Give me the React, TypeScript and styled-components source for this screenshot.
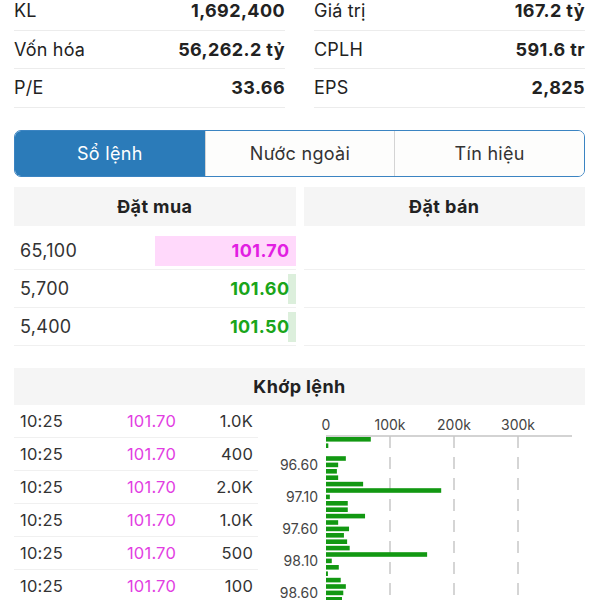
import styled, { createGlobalStyle } from 'styled-components';

const GlobalStyle = createGlobalStyle`
  body {
    margin: 0;
    background: #fff;
    font-family: Inter, "Noto Sans", sans-serif;
    color: #222;
  }
`;

const stats = [
  ['KL', '1,692,400', 'Giá trị', '167.2 tỷ'],
  ['Vốn hóa', '56,262.2 tỷ', 'CPLH', '591.6 tr'],
  ['P/E', '33.66', 'EPS', '2,825'],
];

const tabs = ['Sổ lệnh', 'Nước ngoài', 'Tín hiệu'];

const bids = [
  { vol: '65,100', price: '101.70', ceil: true, bar: 50 },
  { vol: '5,700', price: '101.60', ceil: false, bar: 2.5 },
  { vol: '5,400', price: '101.50', ceil: false, bar: 2.5 },
];

const trades = [
  ['10:25', '101.70', '1.0K'],
  ['10:25', '101.70', '400'],
  ['10:25', '101.70', '2.0K'],
  ['10:25', '101.70', '1.0K'],
  ['10:25', '101.70', '500'],
  ['10:25', '101.70', '100'],
];

// volume per price step (in k), from 96.20 upward
const volumes = [
  70, 3.6, 0, 31, 19, 17, 19, 58, 180, 6, 34, 34, 61, 19, 36, 28, 33, 37, 158, 9,
  20, 3, 23, 31, 27, 25, 22, 18,
];

const Page = styled.div`
  width: 600px;
  height: 600px;
  overflow: hidden;
  box-sizing: border-box;
  padding: 0 15px 0 14px;
`;

const Stats = styled.div`
  display: grid;
  grid-template-columns: 1fr 1fr;
  column-gap: 29px;
  margin-top: -8px;
`;

const StatRow = styled.div`
  height: 37.5px;
  display: flex;
  align-items: center;
  justify-content: space-between;
  border-bottom: 1px solid #ececec;
  font-size: 18px;
  letter-spacing: 0.2px;
  > strong {
    font-weight: 700;
    letter-spacing: 0.4px;
  }
`;

const Tabs = styled.div`
  margin-top: 22.5px;
  height: 47px;
  box-sizing: border-box;
  display: grid;
  grid-template-columns: repeat(3, 1fr);
  border: 1px solid #3b84c2;
  border-radius: 7px;
  overflow: hidden;
`;

const Tab = styled.div<{ $active?: boolean }>`
  display: flex;
  align-items: center;
  justify-content: center;
  font-size: 18px;
  letter-spacing: 0.3px;
  background: ${(p) => (p.$active ? '#2b7bb9' : '#fdfdfc')};
  color: ${(p) => (p.$active ? '#fff' : '#333')};
  & + & {
    border-left: 1px solid #d4d4d4;
  }
`;

const Book = styled.div`
  margin-top: 10px;
  display: grid;
  grid-template-columns: 1fr 1fr;
  column-gap: 8px;
`;

const Side = styled.div`
  display: flex;
  flex-direction: column;
`;

const SideHead = styled.div`
  height: 39px;
  margin-bottom: 6px;
  background: #f5f5f5;
  display: flex;
  align-items: center;
  justify-content: center;
  font-size: 18px;
  font-weight: 700;
  letter-spacing: 0.4px;
`;

const BookRow = styled.div`
  height: 37px;
  border-bottom: 1px solid #f0f0f0;
  display: flex;
  align-items: center;
  justify-content: space-between;
  font-size: 18px;
  letter-spacing: 0.3px;
  color: #333;
  > span {
    padding-left: 6px;
  }
`;

const PriceCell = styled.div<{ $ceil?: boolean }>`
  position: relative;
  height: 30px;
  width: 50%;
  display: flex;
  align-items: center;
  justify-content: flex-end;
  padding-right: 6px;
  box-sizing: border-box;
  font-weight: 700;
  letter-spacing: 0.4px;
  color: ${(p) => (p.$ceil ? '#e21ee2' : '#1aa51a')};
`;

const PriceBar = styled.div<{ $ceil?: boolean }>`
  position: absolute;
  right: 0;
  top: 0;
  bottom: 0;
  background: ${(p) => (p.$ceil ? '#ffd9fb' : '#dcefdc')};
`;

const PriceText = styled.span`
  position: relative;
`;

const MatchHead = styled(SideHead)`
  margin-top: 22px;
  margin-bottom: 0;
  height: 37px;
`;

const MatchBody = styled.div`
  display: grid;
  grid-template-columns: 244px 1fr;
`;

const TradeRow = styled.div`
  height: 32px;
  border-bottom: 1px solid #f0f0f0;
  display: grid;
  grid-template-columns: 80px 76px 1fr;
  align-items: center;
  padding: 0 5px 0 6px;
  font-size: 16.5px;
  letter-spacing: 0.2px;
  color: #333;
`;

const TradePrice = styled.span`
  text-align: right;
  color: #e23ee2;
`;

const TradeVol = styled.span`
  text-align: right;
`;

const X0 = 68;
const K = 0.64;

const VolumeChart = () => (
  <svg width="327" height="195" style={{ display: 'block' }}>
    {[0, 100, 200, 300].map((t) => (
      <text
        key={t}
        x={X0 + t * K}
        y={25}
        textAnchor="middle"
        fontSize="14"
        fill="#444"
        fontFamily="Inter, sans-serif"
      >
        {t === 0 ? '0' : `${t}k`}
      </text>
    ))}
    <line x1={X0} y1={31} x2={314} y2={31} stroke="#c4c4c4" strokeWidth="1.5" />
    {[100, 200, 300].map((t) => (
      <line
        key={t}
        x1={X0 + t * K}
        y1={31}
        x2={X0 + t * K}
        y2={195}
        stroke="#c8c8c8"
        strokeWidth="1.5"
        strokeDasharray="12 9"
      />
    ))}
    {volumes.map((v, i) => {
      const cy = 34.3 + i * 6.4;
      return (
        <g key={i}>
          {v > 0 && (
            <rect x={X0} y={cy - 2.3} width={v * K} height={4.6} fill="#129812" />
          )}
          {i % 5 === 4 && (
            <text
              x={60}
              y={cy + 5}
              textAnchor="end"
              fontSize="14"
              fill="#444"
              fontFamily="Inter, sans-serif"
            >
              {(96.2 + i * 0.1).toFixed(2)}
            </text>
          )}
        </g>
      );
    })}
  </svg>
);

export default function App() {
  return (
    <Page>
      <GlobalStyle />
      <Stats>
        {stats.map(([l1, v1, l2, v2]) => [
          <StatRow key={l1}>
            <span>{l1}</span>
            <strong>{v1}</strong>
          </StatRow>,
          <StatRow key={l2}>
            <span>{l2}</span>
            <strong>{v2}</strong>
          </StatRow>,
        ])}
      </Stats>

      <Tabs>
        {tabs.map((t, i) => (
          <Tab key={t} $active={i === 0}>
            {t}
          </Tab>
        ))}
      </Tabs>

      <Book>
        <Side>
          <SideHead>Đặt mua</SideHead>
          {bids.map((b) => (
            <BookRow key={b.price}>
              <span>{b.vol}</span>
              <PriceCell $ceil={b.ceil}>
                <PriceBar $ceil={b.ceil} style={{ width: `${b.bar * 2}%` }} />
                <PriceText>{b.price}</PriceText>
              </PriceCell>
            </BookRow>
          ))}
        </Side>
        <Side>
          <SideHead>Đặt bán</SideHead>
          <BookRow />
          <BookRow />
          <BookRow />
        </Side>
      </Book>

      <MatchHead>Khớp lệnh</MatchHead>
      <MatchBody>
        <div>
          {trades.map(([time, price, vol], i) => (
            <TradeRow key={i}>
              <span>{time}</span>
              <TradePrice>{price}</TradePrice>
              <TradeVol>{vol}</TradeVol>
            </TradeRow>
          ))}
        </div>
        <VolumeChart />
      </MatchBody>
    </Page>
  );
}
